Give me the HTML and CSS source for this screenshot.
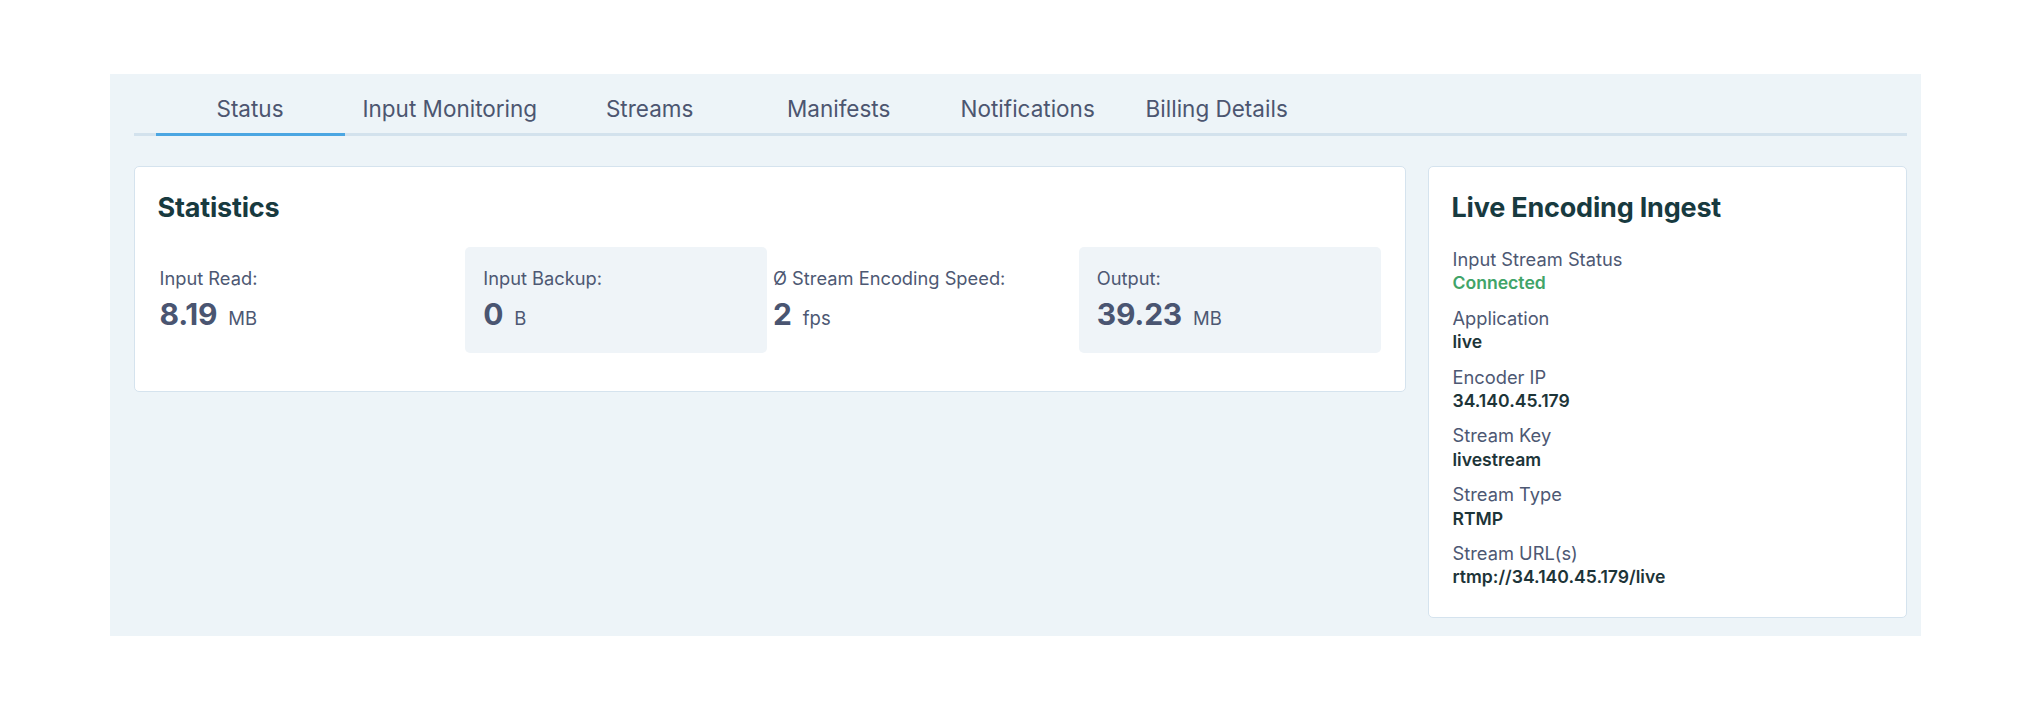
FILE: index.html
```html
<!DOCTYPE html>
<html lang="en">
<head>
<meta charset="utf-8">
<title>Live Encoding</title>
<link rel="stylesheet" href="styles.css">
</head>
<body>
<div class="page">
  <section class="panel">
    <nav class="tabs">
      <div class="tab active">Status</div>
      <div class="tab">Input Monitoring</div>
      <div class="tab">Streams</div>
      <div class="tab">Manifests</div>
      <div class="tab">Notifications</div>
      <div class="tab">Billing Details</div>
    </nav>
    <div class="content">
      <div class="card stats">
        <h2 class="card-title">Statistics</h2>
        <div class="stat-grid">
          <div class="stat">
            <div class="stat-label">Input Read:</div>
            <div class="stat-value">8.19<span class="unit">MB</span></div>
          </div>
          <div class="stat boxed">
            <div class="stat-label">Input Backup:</div>
            <div class="stat-value">0<span class="unit">B</span></div>
          </div>
          <div class="stat">
            <div class="stat-label">Ø Stream Encoding Speed:</div>
            <div class="stat-value">2<span class="unit">fps</span></div>
          </div>
          <div class="stat boxed">
            <div class="stat-label">Output:</div>
            <div class="stat-value">39.23<span class="unit">MB</span></div>
          </div>
        </div>
      </div>
      <div class="card ingest">
        <h2 class="card-title">Live Encoding Ingest</h2>
        <dl class="info">
          <div class="info-row"><dt>Input Stream Status</dt><dd class="ok">Connected</dd></div>
          <div class="info-row"><dt>Application</dt><dd>live</dd></div>
          <div class="info-row"><dt>Encoder IP</dt><dd>34.140.45.179</dd></div>
          <div class="info-row"><dt>Stream Key</dt><dd>livestream</dd></div>
          <div class="info-row"><dt>Stream Type</dt><dd>RTMP</dd></div>
          <div class="info-row"><dt>Stream URL(s)</dt><dd>rtmp://34.140.45.179/live</dd></div>
        </dl>
      </div>
    </div>
  </section>
</div>
</body>
</html>
```

FILE: styles.css
```css
* { box-sizing: border-box; }

html, body {
  margin: 0;
  padding: 0;
  background: #ffffff;
}

body {
  font-family: Inter, "Liberation Sans", sans-serif;
  color: #4d5873;
}

.page {
  padding-top: 74px;
}

.panel {
  width: 1811px;
  height: 562px;
  margin: 0 auto;
  background: #edf4f8;
  padding: 0 14px 0 24px;
}

.tabs {
  display: flex;
  height: 62px;
  padding-left: 22px;
  border-bottom: 3px solid #d3e2ed;
}

.tab {
  min-width: 189px;
  padding: 10px 18px 0;
  display: flex;
  align-items: center;
  justify-content: center;
  font-size: 22.5px;
  color: #4c5670;
  white-space: nowrap;
  margin-bottom: -3px;
  border-bottom: 3px solid transparent;
}

.tab.active {
  border-bottom-color: #4ba6e2;
}

.content {
  display: flex;
  align-items: flex-start;
  gap: 22px;
  margin-top: 30px;
}

.card {
  background: #ffffff;
  border: 1px solid #d5e3ee;
  border-radius: 5px;
  padding: 23px 24px;
}

.stats {
  width: 1272px;
  height: 226px;
}

.ingest {
  width: 479px;
  height: 452px;
}

.card-title {
  margin: 0 0 0 -1px;
  font-size: 27px;
  line-height: 36px;
  font-weight: 700;
  color: #183a3f;
  letter-spacing: -0.2px;
}

.stat-grid {
  display: grid;
  grid-template-columns: repeat(4, 1fr);
  gap: 5px;
  margin-top: 21px;
}

.stat {
  height: 106px;
  padding: 19px 0 0 1px;
}

.stat.boxed {
  background: #eff4f8;
  border-radius: 5px;
  padding-left: 18px;
}

.stat-label {
  font-size: 18.3px;
  line-height: 24px;
  color: #4d5873;
}

.stat-value {
  margin-top: 7px;
  font-size: 30px;
  line-height: 34px;
  font-weight: 700;
  color: #4a5571;
  letter-spacing: -0.2px;
}

.unit {
  font-size: 18.5px;
  font-weight: 400;
  margin-left: 11px;
  letter-spacing: 0;
  color: #4d5873;
}

.info {
  margin: 21px 0 0;
}

.info-row {
  margin-bottom: 10px;
}

.info dt {
  font-size: 18.3px;
  line-height: 24.4px;
  color: #4d5873;
}

.info dd {
  margin: 0;
  font-size: 17.6px;
  line-height: 24.4px;
  font-weight: 600;
  color: #1d3438;
}

.info dd.ok {
  color: #41a468;
}
```
